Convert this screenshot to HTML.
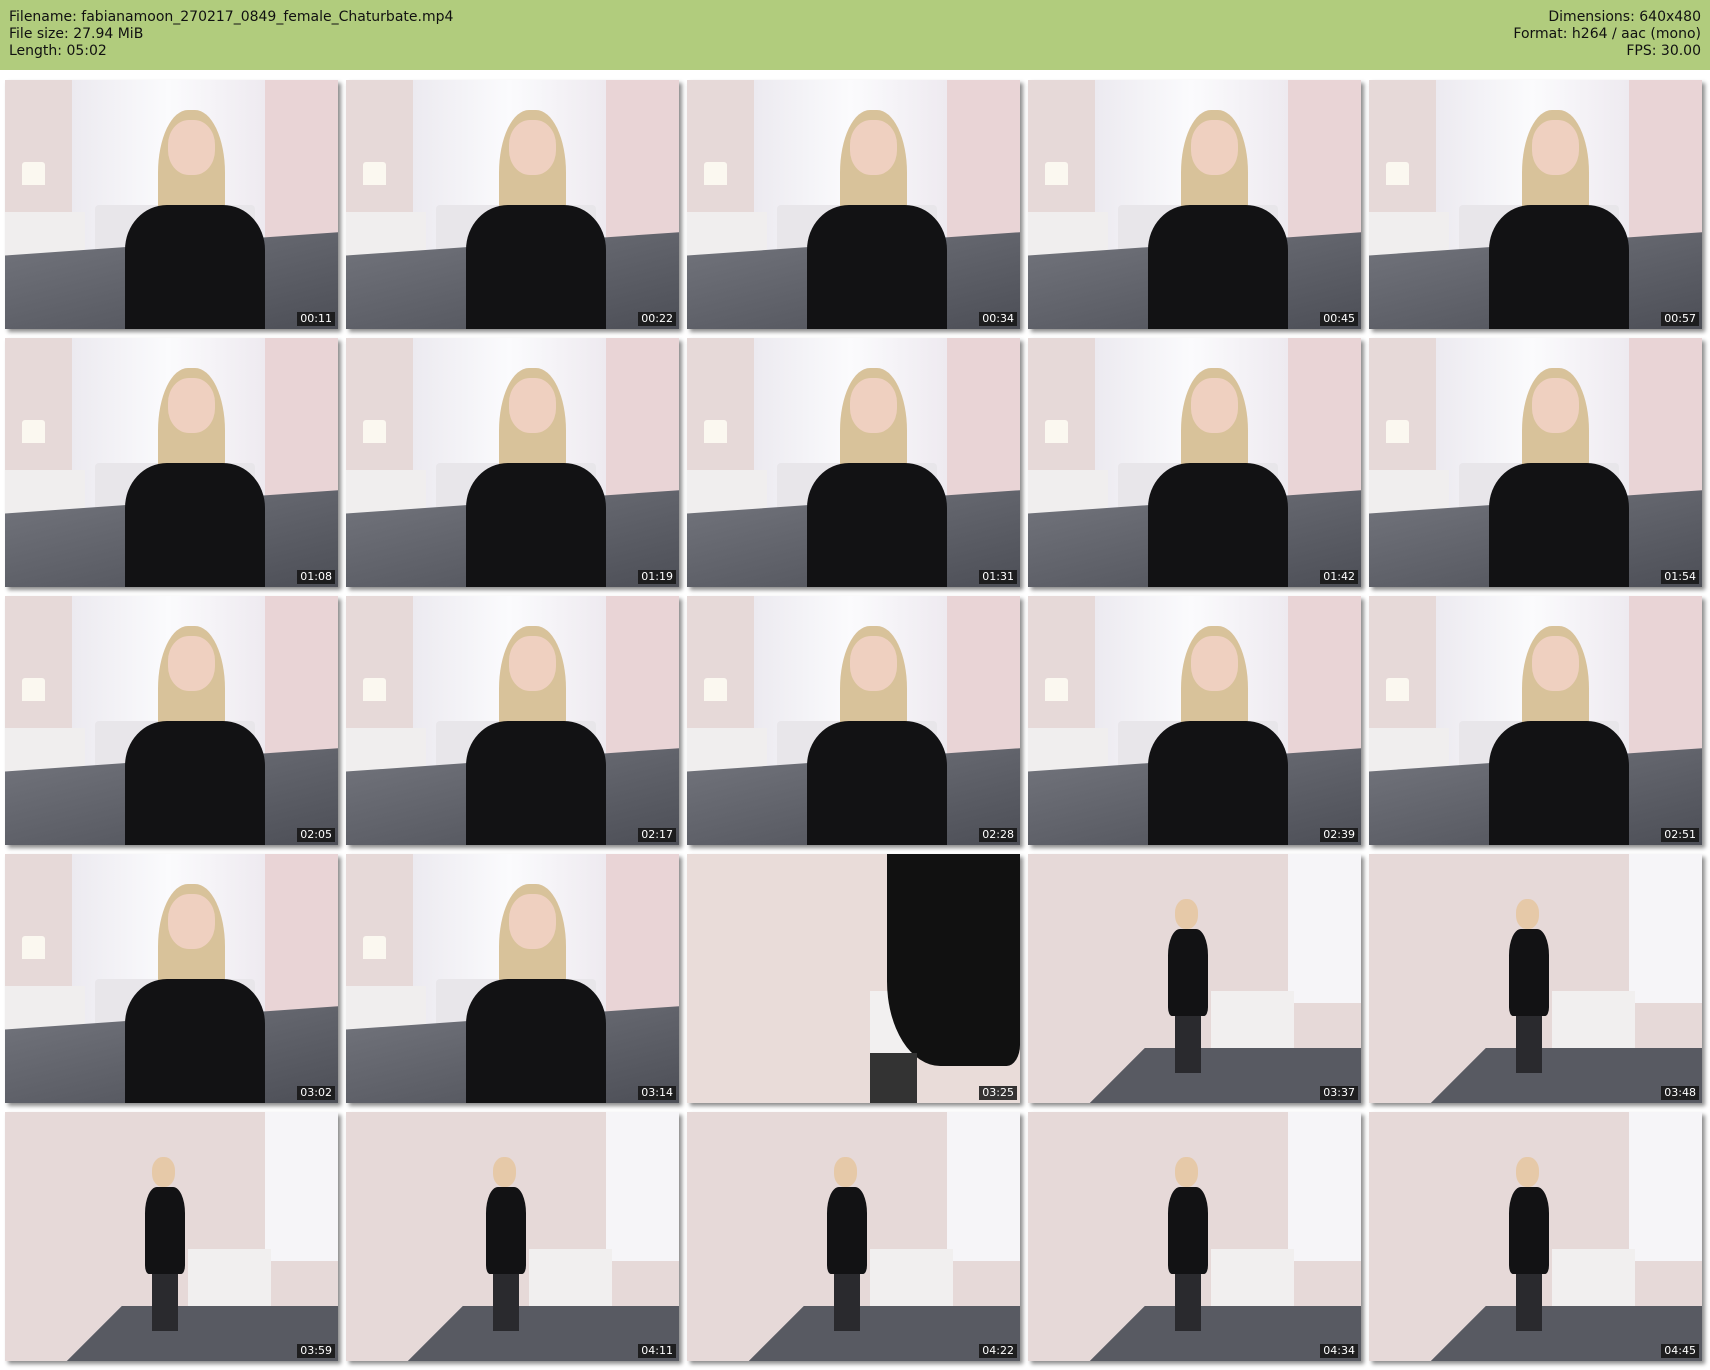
<!DOCTYPE html>
<html><head><meta charset="utf-8"><style>
*{margin:0;padding:0;box-sizing:border-box}
body{width:1710px;height:1370px;background:#fff;font-family:"DejaVu Sans","Liberation Sans",sans-serif;position:relative;overflow:hidden}
.hdr{position:absolute;left:0;top:0;width:1710px;height:70px;background:#b1cc7d;color:#111;font-size:14px;line-height:17px}
.l{position:absolute;left:9px;top:9px}
.r{position:absolute;right:9px;top:9px;text-align:right}
.t{position:absolute;width:333px;height:249px;overflow:hidden;box-shadow:3px 3px 4px rgba(0,0,0,.45);background:#e6d9d8}
.ts{position:absolute;right:3px;bottom:3px;background:rgba(20,20,20,.85);color:#fff;font-size:11px;padding:1px 3px;line-height:12px}
.a{position:absolute}
.cu .win{left:20%;top:0;width:58%;height:72%;background:linear-gradient(90deg,#eceaf0,#fbfbfd 50%,#eeeaf0)}
.cu .rw{left:78%;top:0;width:22%;height:72%;background:#e9d4d6}
.cu .bed{left:-10%;top:66%;width:120%;height:50%;background:linear-gradient(170deg,#70727a,#45474f);transform:rotate(-4deg)}
.cu .hb{left:27%;top:50%;width:48%;height:22%;background:#e8e6ea;border-radius:4px}
.cu .dr{left:0;top:53%;width:24%;height:22%;background:#f0eeee}
.cu .lamp{left:5%;top:33%;width:7%;height:9%;background:#fbf8f0;border-radius:3px 3px 0 0}
.cu .body{left:36%;top:50%;width:42%height:60%;width:42%;height:60%;background:#121214;border-radius:30% 30% 0 0}
.cu .hair{left:46%;top:12%;width:20%;height:56%;background:#d8c29a;border-radius:45% 45% 30% 30%}
.cu .face{left:49%;top:16%;width:14%;height:22%;background:#efd0c0;border-radius:45%}
.wa .win{left:78%;top:0;width:22%;height:60%;background:#f6f5f8}
.wa .bed{left:20%;top:78%;width:90%;height:40%;background:#585a62;transform:skewX(-45deg)}
.wa .dr{left:55%;top:55%;width:25%;height:25%;background:#f1efef}
.wa .fig{left:42%;top:30%;width:12%;height:35%;background:#121214;border-radius:30% 30% 10% 10%}
.wa .legs{left:44%;top:62%;width:8%;height:26%;background:#2a2a2e}
.wa .head{left:44%;top:18%;width:7%;height:12%;background:#e6c9a8;border-radius:45%}
</style></head><body>
<div class="hdr"><div class="l">Filename: fabianamoon_270217_0849_female_Chaturbate.mp4<br>File size: 27.94 MiB<br>Length: 05:02</div>
<div class="r">Dimensions: 640x480<br>Format: h264 / aac (mono)<br>FPS: 30.00</div></div>
<div id="g"></div>
<script>
var ts=["00:11","00:22","00:34","00:45","00:57","01:08","01:19","01:31","01:42","01:54","02:05","02:17","02:28","02:39","02:51","03:02","03:14","03:25","03:37","03:48","03:59","04:11","04:22","04:34","04:45"];
var h="";
for(var i=0;i<25;i++){var c=i%5,r=Math.floor(i/5);var x=5+c*341,y=80+r*258;
var cu=i<17;var inner;
if(i==17){inner='<div class="a" style="left:0;top:0;width:100%;height:100%;background:#e9dcd9"></div><div class="a" style="left:55%;top:55%;width:18%;height:25%;background:#f2f0f0"></div><div class="a" style="left:60%;top:0;width:40%;height:85%;background:#111;border-radius:0 0 10% 40%"></div><div class="a" style="left:55%;top:80%;width:14%;height:20%;background:#333"></div>';}
else inner=cu?'<div class="a win"></div><div class="a rw"></div><div class="a dr"></div><div class="a lamp"></div><div class="a hb"></div><div class="a bed"></div><div class="a hair"></div><div class="a body"></div><div class="a face"></div>':
'<div class="a win"></div><div class="a dr"></div><div class="a bed"></div><div class="a legs"></div><div class="a fig"></div><div class="a head"></div>';
h+='<div class="t '+(cu?'cu':'wa')+'" style="left:'+x+'px;top:'+y+'px">'+inner+'<div class="ts">'+ts[i]+'</div></div>';}
document.getElementById("g").innerHTML=h;
</script>
</body></html>
